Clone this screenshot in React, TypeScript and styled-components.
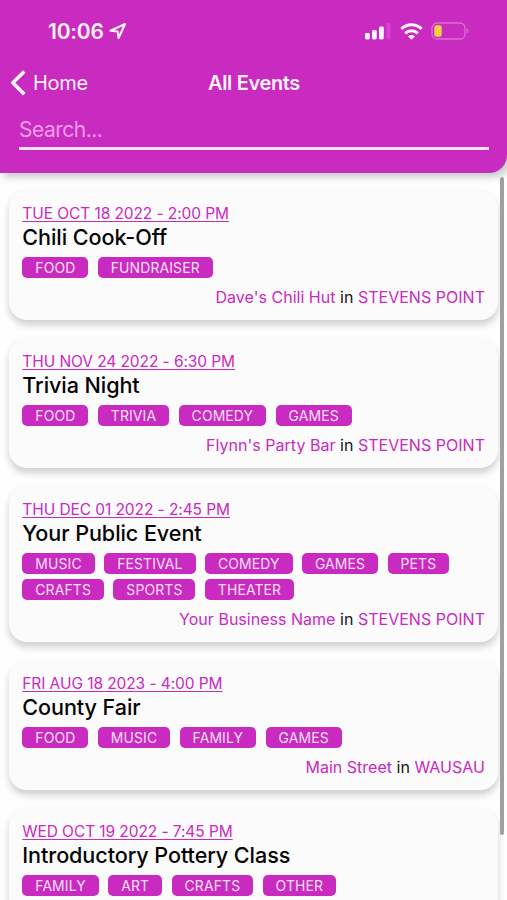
import React from 'react';
import styled, { createGlobalStyle } from 'styled-components';

const MAGENTA = '#c92abf';

const GlobalStyle = createGlobalStyle`
  * { box-sizing: border-box; }
  html, body { margin: 0; padding: 0; background: #fefefe; }
  body { font-family: Inter, "Liberation Sans", sans-serif; overflow: hidden; }
`;

const Screen = styled.div`
  position: relative;
  width: 507px;
  height: 900px;
  overflow: hidden;
  background: #fefefe;
`;

const Header = styled.header`
  position: relative;
  z-index: 1;
  height: 173.4px;
  background: ${MAGENTA};
  border-radius: 0 0 18px 0;
  box-shadow: 4px 4px 7px rgba(20, 50, 45, 0.25);
  color: #fff2fd;
`;

const StatusBar = styled.div`
  display: flex;
  align-items: center;
  justify-content: space-between;
  height: 62px;
  padding: 0 38px 0 48px;
`;

const Clock = styled.div`
  display: flex;
  align-items: center;
  gap: 5px;
  font-size: 21px;
  font-weight: 600;
  letter-spacing: -0.2px;
`;

const StatusIcons = styled.div`
  display: flex;
  align-items: center;
  gap: 8.5px;
`;

const NavBar = styled.nav`
  display: grid;
  grid-template-columns: 1fr auto 1fr;
  align-items: center;
  height: 42px;
  padding: 0 9px 0 10px;
`;

const BackLink = styled.div`
  display: flex;
  align-items: center;
  gap: 7px;
  font-size: 20px;
  letter-spacing: -0.3px;
`;

const NavTitle = styled.h1`
  margin: 0;
  font-size: 20px;
  font-weight: 600;
  letter-spacing: -0.35px;
`;

const SearchField = styled.div`
  height: 46px;
  margin: 0 18px 0 19px;
  padding-top: 13px;
  border-bottom: 3px solid #fbe3f8;
  font-size: 21px;
  line-height: 26px;
  letter-spacing: -0.5px;
  color: #f19ee9;
`;

const EventList = styled.main`
  display: flex;
  flex-direction: column;
  gap: 18px;
  padding: 16.6px 9px 0;
`;

const Card = styled.article`
  display: flex;
  flex-direction: column;
  flex: none;
  padding: 14px 13px 12px 13.3px;
  background: #fbfbfb;
  border-radius: 18px;
  box-shadow: 0 5px 7px rgba(20, 25, 35, 0.2);
`;

const EventDate = styled.div`
  height: 19px;
  font-size: 15.5px;
  line-height: 20px;
  letter-spacing: -0.08px;
  color: ${MAGENTA};
  text-decoration: underline;
  text-decoration-thickness: 1.3px;
  text-underline-offset: 2px;
  text-decoration-skip-ink: none;
`;

const EventTitle = styled.h2`
  margin: 0;
  font-size: 21.6px;
  line-height: 28px;
  font-weight: 500;
  letter-spacing: -0.08px;
  color: #050505;
`;

const Tags = styled.div`
  display: flex;
  flex-wrap: wrap;
  gap: 4.5px 9.4px;
  margin-top: 6px;
`;

const Tag = styled.span`
  height: 21.5px;
  padding: 0 13px;
  border-radius: 5px;
  background: ${MAGENTA};
  color: #fde0fa;
  font-size: 13.9px;
  line-height: 22px;
  letter-spacing: 0.15px;
`;

const Location = styled.div`
  margin-top: 7.5px;
  font-size: 16px;
  line-height: 22px;
  letter-spacing: 0.02px;
  text-align: right;
  color: #151515;
`;

const Place = styled.span`
  color: ${MAGENTA};
`;

const ScrollThumb = styled.div`
  position: absolute;
  z-index: 2;
  top: 177px;
  right: 3px;
  width: 4px;
  height: 658px;
  border-radius: 2px;
  background: #a0a0a0;
`;

interface EventItem {
  date: string;
  title: string;
  tags: string[];
  venue: string;
  city: string;
}

const events: EventItem[] = [
  { date: 'TUE OCT 18 2022 - 2:00 PM', title: 'Chili Cook-Off', tags: ['FOOD', 'FUNDRAISER'], venue: "Dave's Chili Hut", city: 'STEVENS POINT' },
  { date: 'THU NOV 24 2022 - 6:30 PM', title: 'Trivia Night', tags: ['FOOD', 'TRIVIA', 'COMEDY', 'GAMES'], venue: "Flynn's Party Bar", city: 'STEVENS POINT' },
  { date: 'THU DEC 01 2022 - 2:45 PM', title: 'Your Public Event', tags: ['MUSIC', 'FESTIVAL', 'COMEDY', 'GAMES', 'PETS', 'CRAFTS', 'SPORTS', 'THEATER'], venue: 'Your Business Name', city: 'STEVENS POINT' },
  { date: 'FRI AUG 18 2023 - 4:00 PM', title: 'County Fair', tags: ['FOOD', 'MUSIC', 'FAMILY', 'GAMES'], venue: 'Main Street', city: 'WAUSAU' },
  { date: 'WED OCT 19 2022 - 7:45 PM', title: 'Introductory Pottery Class', tags: ['FAMILY', 'ART', 'CRAFTS', 'OTHER'], venue: '', city: '' },
];

const LocationArrow = () => (
  <svg width="18" height="18" viewBox="0 0 18 18" fill="none" stroke="#fff2fd" strokeWidth="2.1" strokeLinejoin="round">
    <path d="M1.5 8.8 16 2 9.6 16 8.7 9.5Z" />
  </svg>
);

const Signal = () => (
  <svg width="26" height="17" viewBox="0 0 26 17" fill="#fff5fe">
    <rect x="0" y="10" width="4.8" height="6.5" rx="1.4" />
    <rect x="7" y="7" width="4.8" height="9.5" rx="1.4" />
    <rect x="14" y="3.5" width="4.8" height="13" rx="1.4" />
    <rect x="21.5" y="0" width="4" height="16.5" rx="1.4" fill="#d544cc" />
  </svg>
);

const Wifi = () => (
  <svg width="23" height="17" viewBox="0 0 23 17" fill="none" stroke="#fff5fe" strokeWidth="3.1">
    <path d="M1.4 6a14.3 14.3 0 0 1 20.2 0" />
    <path d="M5.2 10.4a8.9 8.9 0 0 1 12.6 0" />
    <path d="M11.5 16.8 8 13.4a5 5 0 0 1 7 0Z" fill="#fff5fe" stroke="none" />
  </svg>
);

const Battery = () => (
  <svg width="38" height="18" viewBox="0 0 38 18" fill="none">
    <rect x="1" y="1" width="33" height="16" rx="4.8" stroke="#dc6cd5" strokeWidth="1.3" />
    <rect x="3.3" y="3.2" width="7.4" height="11.6" rx="2" fill="#fbd044" />
    <path d="M35.6 6.2c2.4.8 2.4 4.8 0 5.6Z" fill="#dc6cd5" />
  </svg>
);

const BackChevron = () => (
  <svg width="16" height="26" viewBox="0 0 16 26" fill="none" stroke="#fff5fe" strokeWidth="3.6" strokeLinejoin="round">
    <path d="M14.3 1.5 2.8 12.8 14.3 24.2" />
  </svg>
);

export default function App() {
  return (
    <>
      <GlobalStyle />
      <Screen>
        <Header>
          <StatusBar>
            <Clock>10:06 <LocationArrow /></Clock>
            <StatusIcons><Signal /><Wifi /><Battery /></StatusIcons>
          </StatusBar>
          <NavBar>
            <BackLink><BackChevron />Home</BackLink>
            <NavTitle>All Events</NavTitle>
          </NavBar>
          <SearchField>Search...</SearchField>
        </Header>
        <EventList>
          {events.map((event) => (
            <Card key={event.title}>
              <EventDate>{event.date}</EventDate>
              <EventTitle>{event.title}</EventTitle>
              <Tags>{event.tags.map((tag) => <Tag key={tag}>{tag}</Tag>)}</Tags>
              <Location>
                {event.venue && <><Place>{event.venue}</Place> in <Place>{event.city}</Place></>}
              </Location>
            </Card>
          ))}
        </EventList>
        <ScrollThumb />
      </Screen>
    </>
  );
}
